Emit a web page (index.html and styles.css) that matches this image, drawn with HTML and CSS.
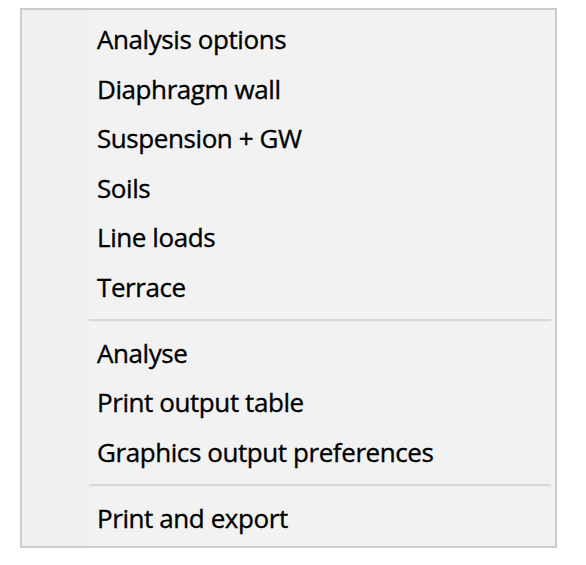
FILE: index.html
```html
<!DOCTYPE html>
<html>
<head>
<meta charset="utf-8">
<link rel="stylesheet" href="styles.css">
</head>
<body>
<div class="menu">
  <div class="item">Analysis options</div>
  <div class="item">Diaphragm wall</div>
  <div class="item">Suspension + GW</div>
  <div class="item">Soils</div>
  <div class="item">Line loads</div>
  <div class="item">Terrace</div>
  <div class="sep"></div>
  <div class="item">Analyse</div>
  <div class="item">Print output table</div>
  <div class="item">Graphics output preferences</div>
  <div class="sep"></div>
  <div class="item">Print and export</div>
</div>
</body>
</html>
```
FILE: styles.css
```css
html, body {
  margin: 0;
  padding: 0;
  background: #ffffff;
}
body {
  padding: 8px 0 0 20px;
}
.menu {
  box-sizing: border-box;
  width: 537px;
  height: 540px;
  border: 2px solid #cccccc;
  padding-top: 5.25px;
  background: linear-gradient(to right, #f0f0f0 0, #f0f0f0 67px, #f2f2f2 67px);
  font-family: "Open Sans", "Noto Sans", sans-serif;
  font-size: 26px;
  letter-spacing: -0.42px;
  color: #000000;
  -webkit-text-stroke: 0.35px #000000;
}
.item {
  box-sizing: border-box;
  height: 49.5px;
  line-height: 48px;
  padding: 0 0 1.5px 75px;
  white-space: nowrap;
}
.sep {
  height: 16.5px;
  padding-top: 7px;
  box-sizing: border-box;
}
.sep::before {
  content: "";
  display: block;
  height: 2px;
  margin: 0 4px 0 67px;
  background: #d8d8d8;
  border-bottom: 1px solid #ececec;
}
```
